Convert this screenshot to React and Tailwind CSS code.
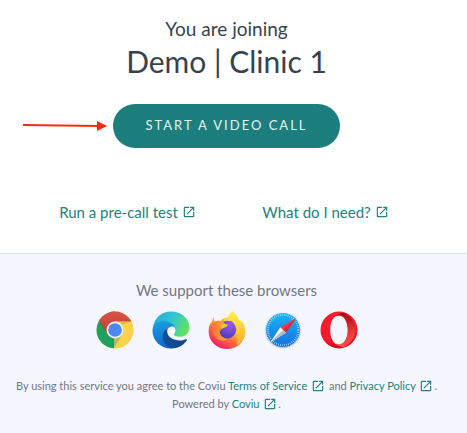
import React from 'react';
import { MdOpenInNew } from 'react-icons/md';

const ChromeIcon = () => (
  <svg viewBox="0 0 38 38" className="size-[38px]" role="img" aria-label="Chrome">
    <defs>
      <linearGradient id="chromeRed" x1="0" y1="0" x2="0" y2="1">
        <stop offset="0" stopColor="#dd5144" />
        <stop offset="1" stopColor="#c53f35" />
      </linearGradient>
      <clipPath id="chromeClip"><circle cx="19" cy="19" r="18.5" /></clipPath>
    </defs>
    <g clipPath="url(#chromeClip)">
      <rect width="38" height="38" fill="#ffd24d" />
      <path d="M0 0H19V19L18 38H0Z" fill="#1da160" />
      <path d="M26.3 23.2L17.8 38H38V10.5H19Z" fill="#ffd24d" />
      <path d="M3.2 9.4L0 0H38V10.5H19L11.6 23.2Z" fill="url(#chromeRed)" />
      <path d="M19 10.5H37L26 14Z" fill="#c9a53b" opacity=".45" />
      <path d="M11.6 23.2L3.2 9.4L12 18Z" fill="#8c3b2d" opacity=".3" />
      <path d="M26.3 23.2L18 37L20 26Z" fill="#15794a" opacity=".3" />
    </g>
    <circle cx="19" cy="19" r="8.5" fill="#f1f3f8" />
    <circle cx="19" cy="19" r="6.8" fill="#4b87ee" />
  </svg>
);

const EdgeIcon = () => (
  <svg viewBox="0 0 38 38" className="size-[38px]" role="img" aria-label="Edge">
    <defs>
      <linearGradient id="edgeTop" x1="0" y1=".3" x2="1" y2=".7">
        <stop offset="0" stopColor="#2aaee0" />
        <stop offset=".5" stopColor="#33c7cb" />
        <stop offset="1" stopColor="#66e750" />
      </linearGradient>
      <linearGradient id="edgeLeft" x1=".4" y1="0" x2=".5" y2="1">
        <stop offset="0" stopColor="#1b9de2" />
        <stop offset="1" stopColor="#1167cc" />
      </linearGradient>
      <linearGradient id="edgeDark" x1="0" y1="0" x2="1" y2="0">
        <stop offset="0" stopColor="#12519b" />
        <stop offset="1" stopColor="#0e4489" />
      </linearGradient>
    </defs>
    <path d="M.8 17.4C1.6 7.7 9.3.5 19 .5C29.8.5 37.5 8 37.5 16.4C37.5 22 33.2 25.8 27.8 25.8C24.4 25.8 21.9 24.7 21.9 23.5C21.9 22.8 23.4 21.9 23.4 19.2C23.4 13.6 16.7 10 10.7 10C6.5 10 2.9 13 .8 17.4Z" fill="url(#edgeTop)" />
    <path d="M.5 19C.9 13.6 5 9.8 10.9 9.8C17.2 9.8 22.5 13.1 23.3 17.2C22.3 15.6 20.3 15 18.7 15.7C14.5 17.6 12 20.4 12 25.3C12 30.7 15.5 35.4 21 37.4C9.8 38.4.1 30 .5 19Z" fill="url(#edgeLeft)" />
    <path d="M16.4 17.1C12.1 19.2 10.6 22.5 10.6 25.7C10.6 32.4 15.7 37.5 21.8 37.3C27 36.7 32 33.7 34.9 29.2C35.3 28.5 34.6 27.9 33.8 28.3C31.9 29.2 29.8 29.5 28 29.5C21 29.5 15.4 25.6 15.2 20.7C15.1 19.3 15.6 18 16.4 17.1Z" fill="url(#edgeDark)" />
  </svg>
);

const FirefoxIcon = () => (
  <svg viewBox="0 0 38 38" className="size-[38px]" role="img" aria-label="Firefox">
    <defs>
      <linearGradient id="foxBody" x1=".85" y1=".1" x2=".2" y2=".9">
        <stop offset="0" stopColor="#fff044" />
        <stop offset=".35" stopColor="#ffc637" />
        <stop offset=".6" stopColor="#ff7139" />
        <stop offset="1" stopColor="#f51f69" />
      </linearGradient>
      <radialGradient id="foxGlobe" cx=".65" cy=".25" r=".8">
        <stop offset="0" stopColor="#9659ea" />
        <stop offset=".5" stopColor="#754bd5" />
        <stop offset="1" stopColor="#423fac" />
      </radialGradient>
      <linearGradient id="foxTail" x1=".5" y1="0" x2=".5" y2="1">
        <stop offset="0" stopColor="#fff24a" />
        <stop offset="1" stopColor="#ffad2d" />
      </linearGradient>
      <linearGradient id="foxHead" x1="0" y1="0" x2="1" y2=".2">
        <stop offset="0" stopColor="#ff6b37" />
        <stop offset="1" stopColor="#ffb52f" />
      </linearGradient>
    </defs>
    <path d="M6 6C5.7 8.2 6.1 9.3 6.8 10.5C8.6 9.7 10.7 9.5 12.7 9.9C16 5 24 5 29 10L33 9.5C36 13 37.6 17.3 37.5 21C37.1 30.7 29.1 38 19 38C8.8 38 .8 30.4.6 20.5C.6 16.9 1.6 13.4 3.2 11.2L3.4 13C3.8 10.3 4.7 7.8 6 6Z" fill="url(#foxBody)" />
    <path d="M24.2 0C27.7 2.7 30.5 6.3 31.5 10.2C32.7 11.3 33 10.4 33.1 9.4C37.2 13.8 38.2 20.3 36.7 25.2C35 29.8 32 32.6 28.6 34C30.2 30.3 29.7 23.5 27.4 18C26.1 15 22.8 12 20.6 9.8C18.8 6.1 21.1 2.5 24.2 0Z" fill="url(#foxTail)" />
    <circle cx="19.4" cy="18.6" r="8.8" fill="url(#foxGlobe)" />
    <path d="M21.6 11.5C24 12.2 25.7 13.6 26.8 15.4C26.5 12.9 24.9 11 22.7 9.6Z" fill="#9059ff" />
    <path d="M6.8 10.5C9 9.5 11.1 9.6 12.9 10.2C13.9 9 15.1 8.1 16.4 7.5C15.5 9.2 15.4 10.6 15.8 12.1L19.5 14.2C18.5 16.2 16.3 16.6 14.4 17.8C12.9 19 12 19.8 11.8 21.4C12.2 24.6 14.7 27.4 19.8 28C15.2 31.8 7.5 29.4 5.1 23.1C3.4 18.6 4.2 13.8 6.8 10.5Z" fill="url(#foxHead)" opacity=".85" />
    <path d="M13 13.1C14.8 12.2 17.4 13.2 20.3 13.6C18.8 15.8 16.8 16.8 14 17.6C12 16.9 11.6 14.4 13 13.1Z" fill="#ffbd35" />
  </svg>
);

const SafariIcon = () => (
  <svg viewBox="0 0 38 38" className="size-[38px]" role="img" aria-label="Safari">
    <defs>
      <linearGradient id="safariDial" x1="0" y1="0" x2="0" y2="1">
        <stop offset="0" stopColor="#1bb5f5" />
        <stop offset="1" stopColor="#1470df" />
      </linearGradient>
      <linearGradient id="safariRim" x1="0" y1="0" x2="0" y2="1">
        <stop offset="0" stopColor="#f3f5f8" />
        <stop offset="1" stopColor="#c7cbd2" />
      </linearGradient>
    </defs>
    <circle cx="19" cy="19" r="18.5" fill="url(#safariRim)" />
    <circle cx="19" cy="19" r="17" fill="url(#safariDial)" />
    <circle cx="19" cy="19" r="15.2" fill="none" stroke="#d2edfd" strokeWidth="2" strokeDasharray=".6 1.4" />
    <path d="M32.2 7L21.9 21.8L16.3 16.2Z" fill="#fb3b3e" />
    <path d="M32.2 7L21.9 21.8L19 19Z" fill="#c92f3c" />
    <path d="M6.2 31.5L16.3 16.2L21.9 21.8Z" fill="#f8fafc" />
    <path d="M6.2 31.5L19 19L21.9 21.8Z" fill="#b2bdc8" />
  </svg>
);

const OperaIcon = () => (
  <svg viewBox="0 0 38 38" className="size-[38px]" role="img" aria-label="Opera">
    <defs>
      <linearGradient id="operaLeft" x1=".3" y1="0" x2=".5" y2="1">
        <stop offset="0" stopColor="#ff1b2d" />
        <stop offset=".7" stopColor="#f5192d" />
        <stop offset="1" stopColor="#c80d1d" />
      </linearGradient>
      <linearGradient id="operaRight" x1="0" y1="0" x2="0" y2="1">
        <stop offset="0" stopColor="#a00b14" />
        <stop offset=".5" stopColor="#e63635" />
        <stop offset="1" stopColor="#ff5148" />
      </linearGradient>
    </defs>
    <path fillRule="evenodd" d="M19 .5A18.5 18.5 0 1 0 19 37.5A18.5 18.5 0 1 0 19 .5ZM19 4.2C24.2 4.2 27.8 10.4 27.8 19C27.8 27.6 24.2 33.8 19 33.8C13.8 33.8 10.2 27.6 10.2 19C10.2 10.4 13.8 4.2 19 4.2Z" fill="url(#operaLeft)" />
    <path d="M15.5 5.4C18 2.7 21.2 1.7 24.3 2.1A18.5 18.5 0 0 1 24.3 35.9C21.2 36.3 18 35.3 15.5 32.6C22.2 35.8 27.8 29 27.8 19C27.8 9 22.2 2.2 15.5 5.4Z" fill="url(#operaRight)" />
  </svg>
);

const browsers = [ChromeIcon, EdgeIcon, FirefoxIcon, SafariIcon, OperaIcon];

const helpLinks = ['Run a pre-call test', 'What do I need?'];

const FooterLink = ({ children }) => (
  <a href="#" className="text-[#21827f]">
    {children} <MdOpenInNew size={14} className="inline mx-px align-[-3px]" />
  </a>
);

export default function App() {
  return (
    <div className="min-h-screen flex flex-col bg-white font-[Lato,sans-serif] text-[#37434c]">
      <main className="flex flex-col items-center pt-[15px] pr-3.5 pb-[25px] border-b border-[#dce4ee]">
        <h1 className="flex flex-col items-center">
          <span className="text-[19px] leading-7">You are joining</span>
          <span className="text-[30px] leading-9">Demo | Clinic 1</span>
        </h1>

        <div className="relative mt-[25px]">
          <button type="button" className="h-11 px-8 rounded-full bg-[#1d7e7e] text-[#e4f3f2] text-[13px] tracking-[2px] whitespace-nowrap">
            START A VIDEO CALL
          </button>
          {/* Arrow pointing at the button */}
          <svg viewBox="0 0 84 12" className="absolute right-full top-4 mr-1.5 w-[84px] h-3" aria-hidden="true">
            <path d="M0 5L76 6" stroke="#fb2a0c" strokeWidth="2" />
            <path d="M74 1L84 6L74 11Z" fill="#fb2a0c" />
          </svg>
        </div>

        <nav className="w-full max-w-[396px] mt-12 grid grid-cols-2">
          {helpLinks.map(label => (
            <a key={label} href="#" className="flex items-center justify-center gap-1 text-[15px] leading-8 text-[#21827f]">
              {label}
              <MdOpenInNew size={14} />
            </a>
          ))}
        </nav>
      </main>

      <footer className="grow flex flex-col items-center pt-6 pr-3.5 bg-[#f5f6fe] text-[#707784]">
        <h2 className="text-[15px] leading-6">We support these browsers</h2>
        <div className="flex gap-[18px] mt-[9px]">
          {browsers.map((Icon, idx) => <Icon key={idx} />)}
        </div>
        <p className="mt-7 text-[11px] leading-[18px] text-center">
          By using this service you agree to the Coviu <FooterLink>Terms of Service</FooterLink> and <FooterLink>Privacy Policy</FooterLink>.
          <br />
          Powered by <FooterLink>Coviu</FooterLink>.
        </p>
      </footer>
    </div>
  );
}
